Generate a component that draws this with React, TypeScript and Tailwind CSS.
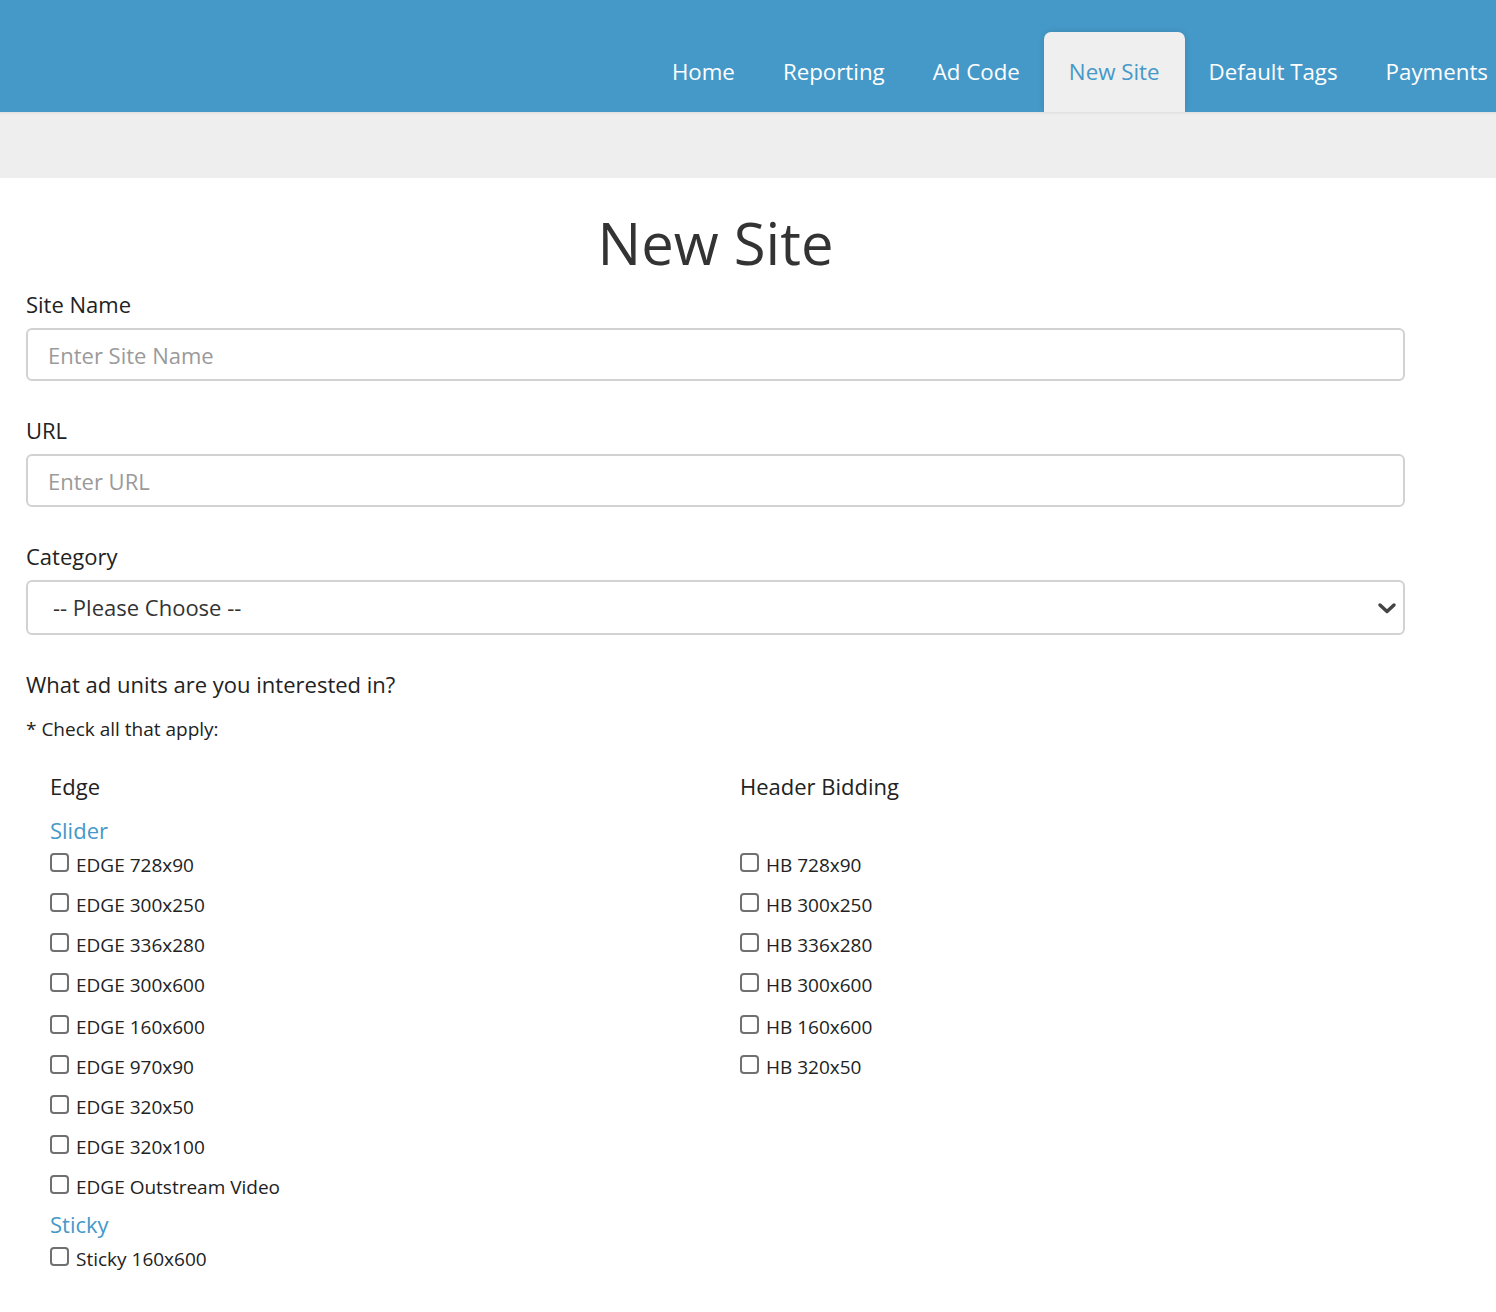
const navItems = ["Home", "Reporting", "Ad Code", "New Site", "Default Tags", "Payments"];

const edgeUnits = [
  "EDGE 728x90",
  "EDGE 300x250",
  "EDGE 336x280",
  "EDGE 300x600",
  "EDGE 160x600",
  "EDGE 970x90",
  "EDGE 320x50",
  "EDGE 320x100",
  "EDGE Outstream Video",
];

const hbUnits = ["HB 728x90", "HB 300x250", "HB 336x280", "HB 300x600", "HB 160x600", "HB 320x50"];

function CheckRow({ label, gap }: { label: string; gap?: boolean }) {
  return (
    <label className={`flex h-[40px] items-center gap-[7px] text-[19px] text-[#222] ${gap ? "mt-[2px]" : ""}`}>
      <span className="mb-[6px] h-[19px] w-[19px] shrink-0 rounded-[4px] border-2 border-[#707070] bg-white" />
      <span>{label}</span>
    </label>
  );
}

function TextField({ label, placeholder, top }: { label: string; placeholder: string; top: string }) {
  return (
    <div className={top}>
      <div className="mb-[9px] text-[22px] leading-[30px] text-[#222]">{label}</div>
      <input
        className="h-[53px] w-full rounded-[6px] border-2 border-[#d2d2d2] px-[20px] text-[22px] text-[#333] placeholder:text-[#9a9a9a] outline-none"
        placeholder={placeholder}
      />
    </div>
  );
}

export default function App() {
  return (
    <div className="min-h-[1312px] bg-white font-['Open_Sans',sans-serif]">
      <header className="flex h-[112px] items-end justify-end overflow-hidden bg-[#4599c8]">
        <nav className="-mr-[16px] flex">
          {navItems.map((item) =>
            item === "New Site" ? (
              <a
                key={item}
                className="flex h-[80px] items-center rounded-t-[7px] bg-[#efefef] px-[25px] text-[22.3px] text-[#4599c8] shadow-[0_0_6px_rgba(0,0,0,0.12)]"
              >
                {item}
              </a>
            ) : (
              <a key={item} className="flex h-[80px] items-center px-[24px] text-[22.3px] text-white">
                {item}
              </a>
            )
          )}
        </nav>
      </header>
      <div className="h-[66px] bg-[#eeeeee] shadow-[inset_0_3px_3px_-2px_rgba(0,0,0,0.08)]" />

      <main className="w-[1405px] pl-[26px]">
        <h1 className="mt-[30px] text-center text-[58px] leading-[70px] text-[#333]">New Site</h1>

        <TextField label="Site Name" placeholder="Enter Site Name" top="mt-[11px]" />
        <TextField label="URL" placeholder="Enter URL" top="mt-[34px]" />

        <div className="mt-[34px]">
          <div className="mb-[9px] text-[22px] leading-[30px] text-[#222]">Category</div>
          <div className="flex h-[55px] items-center justify-between rounded-[6px] border-2 border-[#d2d2d2] pl-[25px] pr-[6px]">
            <span className="text-[22px] text-[#333]">-- Please Choose --</span>
            <svg width="20" height="14" viewBox="0 0 20 14" fill="none">
              <path d="M3 4l7 6.5L17 4" stroke="#444" strokeWidth="3.5" strokeLinecap="round" strokeLinejoin="round" />
            </svg>
          </div>
        </div>

        <p className="mt-[34px] text-[22px] leading-[30px] text-[#222]">What ad units are you interested in?</p>
        <p className="mt-[17px] text-[19px] leading-[26px] text-[#222]">* Check all that apply:</p>

        <div className="mt-[29px] grid grid-cols-[690px_1fr] pl-[24px]">
          <div>
            <div className="text-[22px] leading-[30px] text-[#222]">Edge</div>
            <div className="mt-[14px] text-[22px] leading-[30px] text-[#4599c8]">Slider</div>
            {edgeUnits.map((u, i) => (
              <CheckRow key={u} label={u} gap={i === 4} />
            ))}
            <div className="mt-[2px] text-[22px] leading-[30px] text-[#4599c8]">Sticky</div>
            <CheckRow label="Sticky 160x600" />
          </div>
          <div>
            <div className="text-[22px] leading-[30px] text-[#222]">Header Bidding</div>
            <div className="mt-[14px] h-[30px]" />
            {hbUnits.map((u, i) => (
              <CheckRow key={u} label={u} gap={i === 4} />
            ))}
          </div>
        </div>
      </main>
    </div>
  );
}
